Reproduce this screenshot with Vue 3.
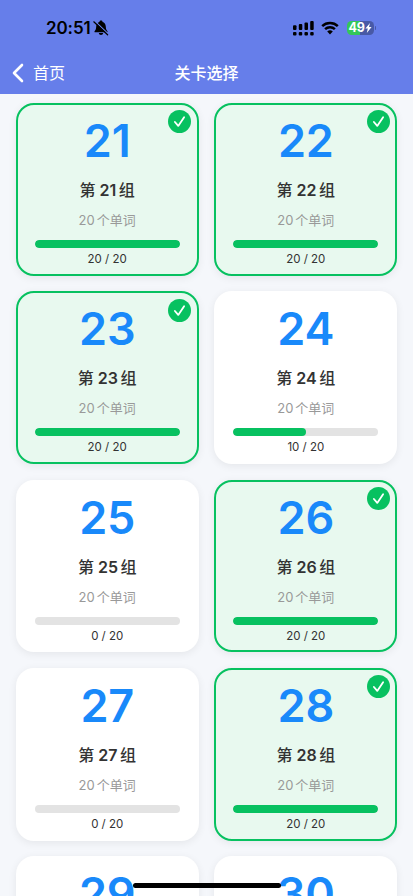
<template>
  <div class="page">
    <header class="header">
      <div class="status-bar">
        <div class="clock">
          <span class="time">20:51</span>
          <svg class="bell" viewBox="0 0 16 16">
            <path d="M2.1 12.3c-.7 0-.9-.8-.4-1.3C3 9.7 3 8.6 3.2 6.5 3.4 3.9 4.6 2.4 6.4 1.9 6.6 1 7.1.6 8 .6s1.4.4 1.6 1.3c1.800.5 3 2 3.200 4.600.2 2.100.2 3.200 1.500 4.500.5.5.3 1.300-.4 1.300z" />
            <path d="M5.8 13h4.4c-.2 1.2-1 2-2.2 2s-2-.8-2.2-2z" />
            <path class="bell-gap" d="M1.7 1 15.3 13.9" />
            <path class="bell-slash" d="M.8 1.8 14.6 14.8" />
          </svg>
        </div>
        <div class="indicators">
          <svg class="signal" viewBox="0 0 21 15">
            <rect x="0" y="4.3" width="3.5" height="4.8" rx="1" />
            <rect x="5.8" y="3" width="3.5" height="6.1" rx="1" />
            <rect x="11.5" y="1.5" width="3.5" height="7.6" rx="1" />
            <rect x="17.2" y="0" width="3.5" height="9.1" rx="1" />
            <rect v-for="n in 4" :key="n" :x="(n - 1) * 5.73" y="11" width="3.5" height="3.5" rx="1" />
          </svg>
          <svg class="wifi" viewBox="0 0 18 14">
            <path d="M1.2 5.1a11.3 11.3 0 0 1 15.6 0M4.1 8.2a7.1 7.1 0 0 1 9.8 0" />
            <path class="wifi-dot" d="M6.2 10.6a4.2 4.2 0 0 1 5.6 0L9 13.5z" />
          </svg>
          <div class="battery">
            <span class="battery-text">49</span>
            <svg class="bolt" viewBox="0 0 7 10">
              <path d="M5 0 .4 5.6h2.4L1.8 10l4.8-6H4z" />
            </svg>
          </div>
          <span class="battery-cap"></span>
        </div>
      </div>
      <nav class="nav">
        <div class="back">
          <svg class="chevron" viewBox="0 0 12 20">
            <path d="M10 2 2 10l8 8" />
          </svg>
          <span>首页</span>
        </div>
        <h1 class="nav-title">关卡选择</h1>
      </nav>
    </header>

    <main class="grid">
      <section
        v-for="level in levels"
        :key="level.id"
        :class="['card', { completed: level.done === level.total }]"
      >
        <span v-if="level.done === level.total" class="check">
          <svg viewBox="0 0 24 24">
            <path d="m7.2 12.5 3.5 4.1 6.1-9" />
          </svg>
        </span>
        <div class="number">{{ level.id }}</div>
        <div class="title">第<span class="title-number">{{ level.id }}</span>组</div>
        <div class="words"><span class="words-number">{{ level.total }}</span>个单词</div>
        <div class="progress">
          <div class="progress-fill" :style="{ width: percent(level) }"></div>
        </div>
        <div class="count">{{ level.done }} / {{ level.total }}</div>
      </section>
    </main>

    <div class="home-indicator"></div>
  </div>
</template>

<script setup>
const doneCounts = [20, 20, 20, 10, 0, 20, 0, 20, 0, 0]

const levels = doneCounts.map((done, index) => ({
  id: 21 + index,
  done,
  total: 20
}))

const percent = (level) => `${(level.done / level.total) * 100}%`
</script>

<style>
body {
  margin: 0;
  overflow: hidden;
}
</style>

<style scoped>
.page {
  position: relative;
  height: 896px;
  overflow: hidden;
  background: #f5f7fb;
  color: #333;
  font-family: Inter, "Noto Sans CJK SC", sans-serif;
}

.header {
  height: 94px;
  background: #667eea;
}

.status-bar {
  display: flex;
  justify-content: space-between;
  box-sizing: border-box;
  height: 52px;
  padding: 20px 37px 0 46px;
}

.clock,
.indicators {
  display: flex;
  align-items: center;
  height: 16px;
}

.time {
  color: #000;
  font-size: 17px;
  font-weight: 600;
  letter-spacing: -0.1px;
}

.bell {
  width: 16px;
  height: 16px;
  margin-left: 2px;
}

.bell-gap {
  stroke: #667eea;
  stroke-width: 1.2;
}

.bell-slash {
  stroke: #000;
  stroke-width: 1.2;
  stroke-linecap: round;
}

.signal {
  width: 21px;
  height: 15px;
}

.wifi {
  width: 18px;
  height: 14px;
  margin-left: 7px;
  fill: none;
  stroke: #000;
  stroke-width: 2.5;
}

.wifi .wifi-dot {
  fill: #000;
  stroke: none;
}

.battery {
  display: flex;
  align-items: center;
  justify-content: center;
  width: 27px;
  height: 14px;
  margin-left: 8px;
  border-radius: 4.5px;
  background: linear-gradient(90deg, #34c759 49%, #4859a6 49%);
  color: #fff;
}

.battery-text {
  font-size: 12.5px;
  font-weight: 700;
  line-height: 14px;
  letter-spacing: -0.2px;
}

.bolt {
  width: 7px;
  height: 10px;
  fill: #fff;
}

.battery-cap {
  width: 1.5px;
  height: 4px;
  margin-left: 1px;
  border-radius: 0 2px 2px 0;
  background: #4859a6;
}

.nav {
  display: grid;
  grid-template-columns: 1fr auto 1fr;
  align-items: center;
  height: 42px;
  color: #fff;
}

.back {
  display: flex;
  align-items: center;
  gap: 9px;
  padding-left: 12px;
  font-size: 16px;
  line-height: 24px;
}

.chevron {
  width: 12px;
  height: 20px;
  fill: none;
  stroke: #fff;
  stroke-width: 2.6;
  stroke-linecap: round;
  stroke-linejoin: round;
}

.nav-title {
  margin: 0;
  font-size: 16px;
  font-weight: 500;
  line-height: 24px;
}

.grid {
  display: grid;
  grid-template-columns: 1fr 1fr;
  grid-auto-rows: 172.7px;
  gap: 15.6px;
  padding: 9px 15.7px 0;
}

.card {
  position: relative;
  box-sizing: border-box;
  padding: 14px 19px 0;
  border-radius: 18px;
  background: #fff;
  box-shadow: 0 2px 8px rgba(0, 0, 0, 0.07);
  text-align: center;
}

.completed {
  padding: 12px 17px 0;
  border: 2px solid #07c160;
  background: #e8f9ef;
}

.check {
  position: absolute;
  top: 5.3px;
  right: 5.7px;
  width: 23px;
  height: 23px;
  border-radius: 50%;
  background: #07c160;
}

.check svg {
  display: block;
  fill: none;
  stroke: #fff;
  stroke-width: 1.9;
  stroke-linecap: round;
  stroke-linejoin: round;
}

.number {
  color: #1989fa;
  font-size: 45px;
  font-weight: 600;
  line-height: 48px;
  letter-spacing: -0.2px;
}

.title {
  margin-top: 13px;
  font-size: 16px;
  font-weight: 500;
  line-height: 24px;
}

.title-number {
  margin: 0 2.5px 0 4px;
  font-weight: 600;
}

.words {
  margin-top: 8px;
  color: #999;
  font-size: 13px;
  line-height: 20px;
}

.words-number {
  margin-right: 2px;
}

.progress {
  height: 8px;
  margin-top: 10px;
  overflow: hidden;
  border-radius: 4px;
  background: #e3e3e3;
}

.progress-fill {
  height: 100%;
  border-radius: 4px;
  background: #07c160;
}

.count {
  margin-top: 3px;
  font-size: 11.5px;
  line-height: 16px;
}

.home-indicator {
  position: absolute;
  bottom: 8px;
  left: 133px;
  width: 148px;
  height: 5px;
  border-radius: 3px;
  background: #000;
}
</style>
